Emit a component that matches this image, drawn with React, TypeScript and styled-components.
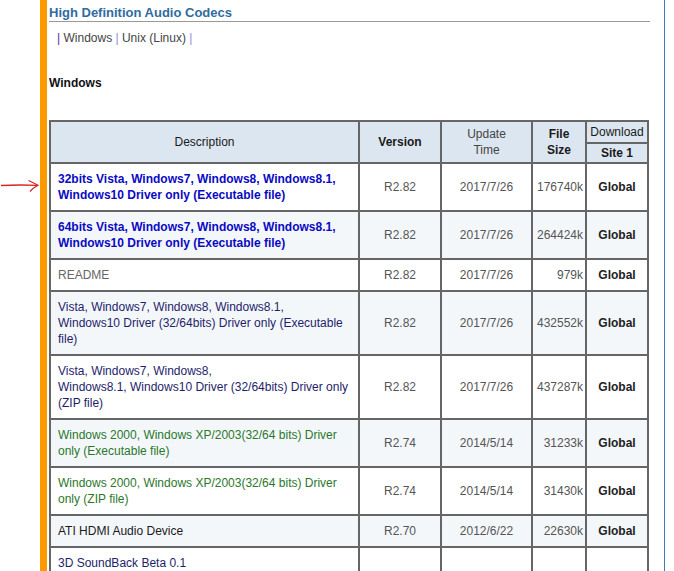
import styled, { createGlobalStyle } from 'styled-components';

const GlobalStyle = createGlobalStyle`
  body {
    margin: 0;
    background: #fff;
    font-family: "Liberation Sans", Arial, sans-serif;
  }
`;

const Page = styled.div`
  display: flex;
  min-height: 100vh;
`;

const Gutter = styled.div`
  position: relative;
  width: 40px;
  flex-shrink: 0;
`;

const Arrow = styled.svg`
  position: absolute;
  top: 176px;
  left: 0;
`;

const OrangeBar = styled.div`
  width: 7px;
  flex-shrink: 0;
  background-color: #ff9900;
`;

const Main = styled.div`
  width: 601px;
  padding: 0 14px 0 2px;
  border-right: 1px solid #3f7cb4;
`;

const Heading = styled.div`
  padding-top: 4px;
  font-size: 13px;
  line-height: 17px;
  font-weight: 700;
  color: #2f6c9f;
  border-bottom: 1px solid #999;
`;

const Nav = styled.div`
  margin-top: 8px;
  padding-left: 8px;
  font-size: 12px;
  line-height: 16px;
  color: #444;
`;

const Pipe = styled.span<{ $first?: boolean }>`
  color: ${(p) => (p.$first ? '#5b2d9e' : '#8d8dd6')};
`;

const SubHeading = styled.div`
  margin-top: 29px;
  font-size: 12px;
  line-height: 16px;
  font-weight: 700;
  color: #111;
`;

const Table = styled.table`
  margin-top: 29px;
  width: 600px;
  table-layout: fixed;
  border-collapse: separate;
  border-spacing: 0;
  border-top: 2px solid #666;
  border-left: 2px solid #666;
  font-size: 12px;
  line-height: 16px;
`;

const Th = styled.th<{ $w?: number; $bold?: boolean; $pad?: string; $dark?: boolean }>`
  box-sizing: border-box;
  ${(p) => (p.$w ? `width: ${p.$w}px;` : '')}
  padding: ${(p) => p.$pad ?? '0 2px'};
  background-color: #dce6f0;
  border-right: 2px solid #666;
  border-bottom: 2px solid #666;
  text-align: center;
  vertical-align: middle;
  font-weight: ${(p) => (p.$bold ? 700 : 400)};
  color: ${(p) => (p.$bold || p.$dark ? '#1a1a1a' : '#444')};
`;

const Tr = styled.tr<{ $alt: boolean }>`
  background-color: ${(p) => (p.$alt ? '#f4f7fa' : '#fff')};
`;

const Td = styled.td<{ $align?: string }>`
  padding: 7px 2px;
  border-right: 2px solid #666;
  border-bottom: 2px solid #666;
  text-align: ${(p) => p.$align ?? 'center'};
  vertical-align: middle;
  color: #555;
  white-space: nowrap;
`;

type Kind = 'link' | 'readme' | 'navy' | 'green' | 'plain';

const kindColor: Record<Kind, string> = {
  link: '#0a0ac4',
  readme: '#666',
  navy: '#1e1e6a',
  green: '#2a782a',
  plain: '#1a1a1a',
};

const DescCell = styled.td<{ $kind: Kind }>`
  padding: 7px 4px 7px 7px;
  border-right: 2px solid #666;
  border-bottom: 2px solid #666;
  vertical-align: middle;
  white-space: nowrap;
  color: ${(p) => kindColor[p.$kind]};
  font-weight: ${(p) => (p.$kind === 'link' ? 700 : 400)};
`;

const SiteCell = styled(Td)`
  font-weight: 700;
  color: #222;
`;

type Row = {
  kind: Kind;
  lines: string[];
  version?: string;
  date?: string;
  size?: string;
  site?: string;
};

const rows: Row[] = [
  {
    kind: 'link',
    lines: ['32bits Vista, Windows7, Windows8, Windows8.1,', 'Windows10 Driver only (Executable file)'],
    version: 'R2.82',
    date: '2017/7/26',
    size: '176740k',
    site: 'Global',
  },
  {
    kind: 'link',
    lines: ['64bits Vista, Windows7, Windows8, Windows8.1,', 'Windows10 Driver only (Executable file)'],
    version: 'R2.82',
    date: '2017/7/26',
    size: '264424k',
    site: 'Global',
  },
  { kind: 'readme', lines: ['README'], version: 'R2.82', date: '2017/7/26', size: '979k', site: 'Global' },
  {
    kind: 'navy',
    lines: [
      'Vista, Windows7, Windows8, Windows8.1,',
      'Windows10 Driver (32/64bits) Driver only (Executable',
      'file)',
    ],
    version: 'R2.82',
    date: '2017/7/26',
    size: '432552k',
    site: 'Global',
  },
  {
    kind: 'navy',
    lines: ['Vista, Windows7, Windows8,', 'Windows8.1, Windows10 Driver (32/64bits) Driver only', '(ZIP file)'],
    version: 'R2.82',
    date: '2017/7/26',
    size: '437287k',
    site: 'Global',
  },
  {
    kind: 'green',
    lines: ['Windows 2000, Windows XP/2003(32/64 bits) Driver', 'only (Executable file)'],
    version: 'R2.74',
    date: '2014/5/14',
    size: '31233k',
    site: 'Global',
  },
  {
    kind: 'green',
    lines: ['Windows 2000, Windows XP/2003(32/64 bits) Driver', 'only (ZIP file)'],
    version: 'R2.74',
    date: '2014/5/14',
    size: '31430k',
    site: 'Global',
  },
  {
    kind: 'plain',
    lines: ['ATI HDMI Audio Device'],
    version: 'R2.70',
    date: '2012/6/22',
    size: '22630k',
    site: 'Global',
  },
  { kind: 'navy', lines: ['3D SoundBack Beta 0.1'] },
];

export default function App() {
  return (
    <>
      <GlobalStyle />
      <Page>
        <Gutter>
          <Arrow width="40" height="20" viewBox="0 176 40 20">
            <path d="M1 185.5 Q18 184.6 37.5 185.3" stroke="#d92424" strokeWidth="1.3" fill="none" />
            <path d="M28.5 180.5 Q34 183 38 185.3 Q33 188 30 191.5" stroke="#d92424" strokeWidth="1.3" fill="none" />
          </Arrow>
        </Gutter>
        <OrangeBar />
        <Main>
          <Heading>High Definition Audio Codecs</Heading>
          <Nav>
            <Pipe $first>|</Pipe> Windows <Pipe>|</Pipe> Unix (Linux) <Pipe>|</Pipe>
          </Nav>
          <SubHeading>Windows</SubHeading>
          <Table>
            <thead>
              <tr>
                <Th rowSpan={2} $w={309} $dark>
                  Description
                </Th>
                <Th rowSpan={2} $w={82} $bold>
                  Version
                </Th>
                <Th rowSpan={2} $w={91}>
                  Update
                  <br />
                  Time
                </Th>
                <Th rowSpan={2} $w={54} $bold>
                  File
                  <br />
                  Size
                </Th>
                <Th $w={62} $pad="2px 0" $dark>
                  Download
                </Th>
              </tr>
              <tr>
                <Th $bold $pad="1px 0">
                  Site 1
                </Th>
              </tr>
            </thead>
            <tbody>
              {rows.map((r, i) => (
                <Tr key={i} $alt={i % 2 === 1}>
                  <DescCell $kind={r.kind}>
                    {r.lines.map((l, j) => (
                      <div key={j}>{l}</div>
                    ))}
                  </DescCell>
                  <Td>{r.version}</Td>
                  <Td>{r.date}</Td>
                  <Td $align="right">{r.size}</Td>
                  <SiteCell>{r.site}</SiteCell>
                </Tr>
              ))}
            </tbody>
          </Table>
        </Main>
      </Page>
    </>
  );
}
